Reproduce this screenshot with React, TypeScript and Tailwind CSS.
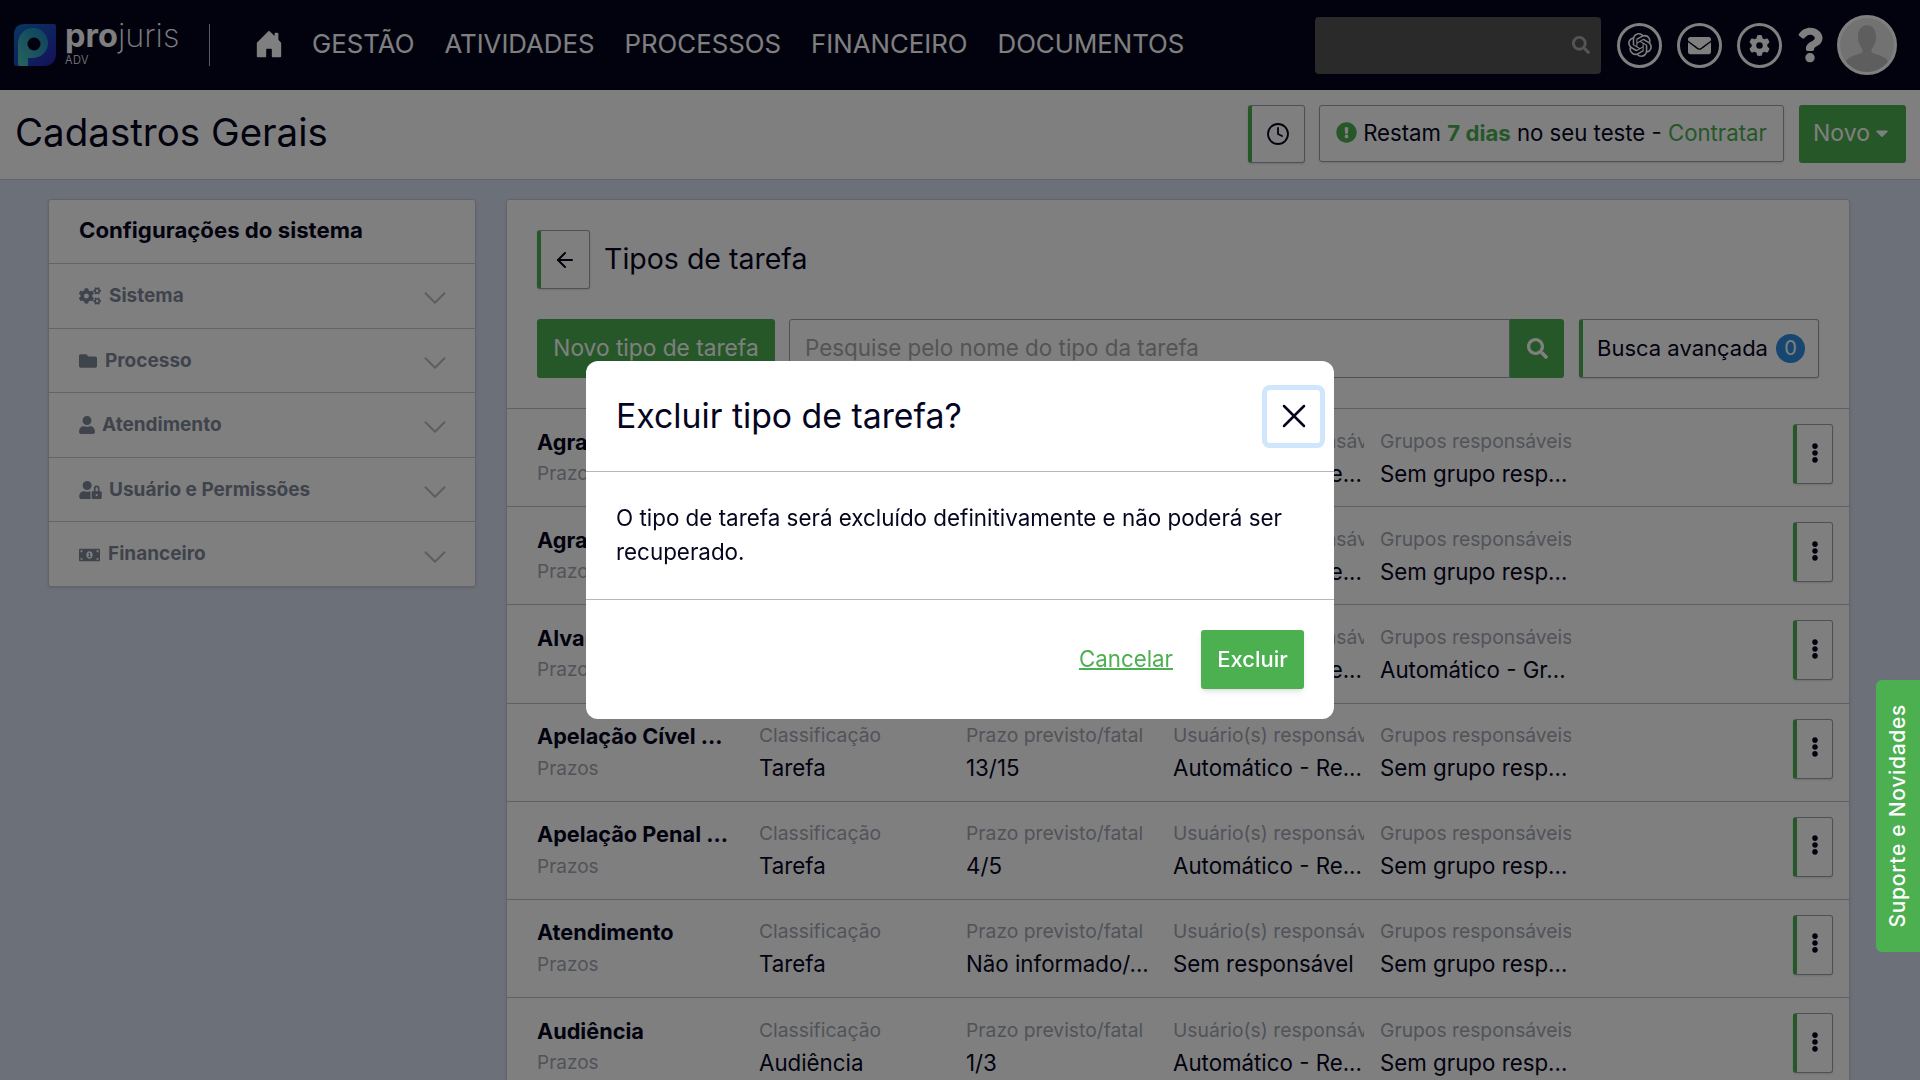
import React from 'react';
import { ArrowLeft, ChevronDown, Clock, X } from 'lucide-react';
import {
  FaCaretDown,
  FaCogs,
  FaEllipsisV,
  FaEnvelope,
  FaExclamationCircle,
  FaFolder,
  FaMoneyBillAlt,
  FaQuestion,
  FaSearch,
  FaUser,
  FaUserLock,
} from 'react-icons/fa';
import { FaGear } from 'react-icons/fa6';
import { BsHouseDoorFill } from 'react-icons/bs';
import { SiOpenai } from 'react-icons/si';

const navItems = ['GESTÃO', 'ATIVIDADES', 'PROCESSOS', 'FINANCEIRO', 'DOCUMENTOS'];

const sideItems = [
  { label: 'Sistema', icon: <FaCogs className="w-[22px] h-[18px]" />, gap: 'gap-[8px]' },
  { label: 'Processo', icon: <FaFolder className="w-[18px] h-[18px]" />, gap: 'gap-[8px]' },
  { label: 'Atendimento', icon: <FaUser className="w-[16px] h-[18px]" />, gap: 'gap-[7px]' },
  { label: 'Usuário e Permissões', icon: <FaUserLock className="w-[23px] h-[18px]" />, gap: 'gap-[7px]' },
  { label: 'Financeiro', icon: <FaMoneyBillAlt className="w-[21px] h-[18px]" />, gap: 'gap-[8px]' },
];

const rows = [
  { name: 'Agravo de Inst...', cls: 'Tarefa', prazo: '13/15', user: 'Automático - Re...', group: 'Sem grupo resp...' },
  { name: 'Agravo Regim...', cls: 'Tarefa', prazo: '13/15', user: 'Automático - Re...', group: 'Sem grupo resp...' },
  { name: 'Alvará Judicial', cls: 'Tarefa', prazo: '4/5', user: 'Automático - Re...', group: 'Automático - Gr...' },
  { name: 'Apelação Cível ...', cls: 'Tarefa', prazo: '13/15', user: 'Automático - Re...', group: 'Sem grupo resp...' },
  { name: 'Apelação Penal ...', cls: 'Tarefa', prazo: '4/5', user: 'Automático - Re...', group: 'Sem grupo resp...' },
  { name: 'Atendimento', cls: 'Tarefa', prazo: 'Não informado/...', user: 'Sem responsável', group: 'Sem grupo resp...' },
  { name: 'Audiência', cls: 'Audiência', prazo: '1/3', user: 'Automático - Re...', group: 'Sem grupo resp...' },
];

function Logo() {
  return (
    <svg viewBox="0 0 42 42" className="w-[42px] h-[42px] shrink-0">
      <defs>
        <linearGradient id="lg1" x1="0" y1="0" x2="1" y2="1">
          <stop offset="0" stopColor="#0f6fc4" />
          <stop offset="1" stopColor="#2c1fb4" />
        </linearGradient>
        <linearGradient id="lg2" x1="0" y1="1" x2="1" y2="0">
          <stop offset="0" stopColor="#4cc9bb" />
          <stop offset="1" stopColor="#1b7fc0" />
        </linearGradient>
      </defs>
      <path d="M11 0H40Q42 0 42 2V29Q42 42 29 42H2Q0 42 0 40V11Q0 0 11 0Z" fill="url(#lg1)" />
      <path d="M4 40V19A15 15 0 1 1 19 34H14V42H6Q4 42 4 40Z" fill="url(#lg2)" />
      <circle cx="20" cy="20" r="6.5" fill="#04041e" />
    </svg>
  );
}

function ColorBarButton({ className, children }: { className: string; children: React.ReactNode }) {
  return (
    <div className={`flex items-center justify-center bg-white border border-gray-400 border-l-4 border-l-[#4caf50] rounded-[3px] shadow-sm ${className}`}>
      {children}
    </div>
  );
}

function TaskRow({ row }: { row: (typeof rows)[number] }) {
  return (
    <div className="h-[98.2px] shrink-0 border-t border-[#bcc0cc] flex pl-[30px] pr-[16px] pt-[15px]">
      <div className="w-[222px] shrink-0 pt-[2.5px]">
        <div className="text-[21.7px] leading-[30px] font-bold text-[#05051f] whitespace-nowrap overflow-hidden">{row.name}</div>
        <div className="text-[19px] leading-[24px] mt-[5.5px] text-[#a3a7b3]">Prazos</div>
      </div>
      <Cell label="Classificação" value={row.cls} width="w-[207px]" />
      <Cell label="Prazo previsto/fatal" value={row.prazo} width="w-[207px]" />
      <Cell label="Usuário(s) responsáveis" value={row.user} width="w-[207px]" />
      <Cell label="Grupos responsáveis" value={row.group} width="w-[207px]" />
      <div className="flex-1 flex justify-end">
        <ColorBarButton className="w-[40px] h-[60px] text-[#05051f]">
          <FaEllipsisV className="w-[14px] h-[20px] mb-[3px]" />
        </ColorBarButton>
      </div>
    </div>
  );
}

function Cell({ label, value, width }: { label: string; value: string; width: string }) {
  return (
    <div className={`${width} shrink-0 pt-[4.5px]`}>
      <div className="w-[191px] overflow-hidden whitespace-nowrap text-[19.3px] leading-[24px] text-[#a3a7b3]">{label}</div>
      <div className="mt-[6px] text-[22.3px] leading-[30px] whitespace-nowrap text-[#05051f]">{value}</div>
    </div>
  );
}

function NavCircle({ children }: { children: React.ReactNode }) {
  return (
    <div className="w-[45px] h-[45px] rounded-full border-[3px] border-white text-white flex items-center justify-center">
      {children}
    </div>
  );
}

export default function App() {
  return (
    <div className="relative h-screen overflow-hidden bg-[#d9e0f3] [font-family:Inter,sans-serif] text-[#05051f]">
      {/* Top nav */}
      <header className="h-[90px] bg-[#04041e] flex items-center pl-[14px] pr-[23px]">
        <Logo />
        <div className="ml-[9px] w-[126px] text-white leading-none mb-[2px]">
          <div className="text-[32.5px] leading-[28px] whitespace-nowrap">
            <span className="font-bold">pro</span>
            <span className="font-extralight">juris</span>
          </div>
          <div className="text-[11px] leading-[12px] mt-[4px] font-light tracking-[0.5px]">ADV</div>
        </div>
        <div className="w-px h-[42px] bg-white/70 ml-[18px]" />
        <BsHouseDoorFill className="w-[30px] h-[30px] text-white ml-[44px] mb-[2px]" />
        <nav className="flex items-center gap-[30px] ml-[28px] mb-[2px] text-white text-[25.8px] whitespace-nowrap">
          {navItems.map((item) => (
            <span key={item}>{item}</span>
          ))}
        </nav>
        <div className="ml-auto w-[286px] h-[57px] bg-[#555555] rounded-[4px] flex items-center justify-end pr-[11px]">
          <FaSearch className="w-[18px] h-[18px] text-[#aaaaaa]" />
        </div>
        <div className="ml-[16px] flex items-center gap-[15px]">
          <NavCircle><SiOpenai className="w-[24px] h-[24px]" /></NavCircle>
          <NavCircle><FaEnvelope className="w-[23px] h-[23px]" /></NavCircle>
          <NavCircle><FaGear className="w-[21px] h-[21px]" /></NavCircle>
        </div>
        <FaQuestion className="ml-[15px] w-[26px] h-[40px] text-white" />
        <div className="ml-[14px] w-[60px] h-[60px] rounded-full border-[3px] border-white bg-[#e4e4e4] overflow-hidden">
          <svg viewBox="0 0 60 60" className="w-full h-full">
            <path d="M30 8c7 0 10 6 10 13 0 6-3 11-5 14v3c3 2 14 4 18 9v13H7V47c4-5 15-7 18-9v-3c-2-3-5-8-5-14 0-7 3-13 10-13Z" fill="#bcbcbc" />
          </svg>
        </div>
      </header>

      {/* Page title bar */}
      <div className="h-[90px] bg-white border-b border-[#c6c9d2] flex items-start pt-[15px] pl-[15px] pr-[14px]">
        <h1 className="text-[38.5px] leading-[54px] font-normal">Cadastros Gerais</h1>
        <div className="ml-auto flex items-start">
          <ColorBarButton className="w-[57px] h-[58px]">
            <Clock className="w-[24px] h-[24px]" strokeWidth={1.8} />
          </ColorBarButton>
          <div className="ml-[14px] w-[465px] h-[57px] pb-[2px] flex items-center justify-center gap-[6px] bg-white border border-gray-400 rounded-[3px] text-[22.2px] whitespace-nowrap shadow-sm">
            <FaExclamationCircle className="w-[21px] h-[21px] text-[#4caf50]" />
            <span>
              Restam <b className="text-[#4caf50]">7 dias</b> no seu teste - <span className="text-[#4caf50]">Contratar</span>
            </span>
          </div>
          <div className="ml-[15px] w-[107px] h-[58px] pb-[2px] bg-[#4caf50] rounded-[3px] flex items-center justify-center gap-[2px] text-white text-[23px]">
            Novo
            <FaCaretDown className="w-[20px] h-[20px]" />
          </div>
        </div>
      </div>

      {/* Body */}
      <div className="flex items-start pt-[19px] pl-[48px] pr-[70px] gap-[30px]">
        <aside className="w-[428px] shrink-0 bg-white border border-[#c6c9d2] rounded-[3px] shadow-sm">
          <div className="h-[63px] pb-[3px] flex items-center pl-[30px] text-[22.2px] font-bold">Configurações do sistema</div>
          {sideItems.map((item) => (
            <div key={item.label} className="h-[64.6px] pt-[1px] border-t border-[#c6c9d2] flex items-center pl-[30px] pr-[21px] text-[#7f8799] font-bold text-[19px]">
              <span className={`flex items-center ${item.gap}`}>
                {item.icon}
                {item.label}
              </span>
              <ChevronDown className="ml-auto w-[38px] h-[38px] text-[#bdbdbd] mt-[4px]" strokeWidth={1.3} />
            </div>
          ))}
        </aside>

        <main className="flex-1 min-w-0 bg-white border border-[#c6c9d2] rounded-[3px] shadow-sm">
          <div className="flex items-center pt-[30px] pl-[30px]">
            <ColorBarButton className="w-[53px] h-[59px]">
              <ArrowLeft className="w-[24px] h-[24px]" strokeWidth={2} />
            </ColorBarButton>
            <h2 className="ml-[14px] text-[28.5px] font-normal">Tipos de tarefa</h2>
          </div>
          <div className="flex pt-[30px] pl-[30px] pr-[30px] pb-[30px]">
            <div className="w-[238px] h-[59px] pb-[1px] bg-[#4caf50] rounded-[3px] text-white text-[22.7px] flex items-center justify-center whitespace-nowrap">
              Novo tipo de tarefa
            </div>
            <div className="ml-[14px] flex-1 h-[59px] pb-[1px] border border-gray-400 rounded-l-[3px] flex items-center pl-[15px] text-[22.4px] text-[#a8a8a8] whitespace-nowrap">
              Pesquise pelo nome do tipo da tarefa
            </div>
            <div className="w-[54px] h-[59px] bg-[#4caf50] rounded-r-[3px] flex items-center justify-center text-white">
              <FaSearch className="w-[21px] h-[21px]" />
            </div>
            <ColorBarButton className="ml-[15px] w-[240px] h-[59px] pb-[1px] pl-[1px] gap-[8px] text-[22px] whitespace-nowrap">
              Busca avançada
              <span className="w-[29px] h-[29px] rounded-full bg-[#2e8fe0] text-white flex items-center justify-center text-[20px]">0</span>
            </ColorBarButton>
          </div>
          <div className="flex flex-col">
            {rows.map((row) => (
              <TaskRow key={row.name} row={row} />
            ))}
          </div>
        </main>
      </div>

      {/* Dim layer */}
      <div className="fixed inset-0 z-10 bg-black/50" />

      {/* Side tab */}
      <div className="fixed z-20 right-0 top-[680px] w-[44px] h-[272px] bg-[#4caf50] rounded-l-[6px] flex items-center justify-center">
        <span className="-rotate-90 whitespace-nowrap text-white text-[21px] tracking-[0.7px] font-medium">Suporte e Novidades</span>
      </div>

      {/* Modal */}
      <div className="fixed inset-0 z-30 flex items-center justify-center">
        <div className="w-[748px] h-[358px] bg-white rounded-[12px] flex flex-col">
          <div className="h-[111px] border-b border-[#b4b6be] flex items-center justify-between pl-[30px] pr-[10px]">
            <h3 className="text-[33.8px] font-normal">Excluir tipo de tarefa?</h3>
            <div className="w-[53px] h-[53px] m-[4px] rounded-[3px] ring-[5px] ring-[#cfe6fd] flex items-center justify-center">
              <X className="w-[40px] h-[40px]" strokeWidth={1.5} />
            </div>
          </div>
          <div className="h-[128px] border-b border-[#b4b6be] px-[30px] pt-[29px] text-[22.4px] leading-[34px]">
            O tipo de tarefa será excluído definitivamente e não poderá ser recuperado.
          </div>
          <div className="flex-1 flex items-center justify-end gap-[28px] pr-[30px]">
            <span className="text-[22.3px] text-[#4caf50] underline decoration-2 mb-[2px]">Cancelar</span>
            <div className="w-[103px] h-[59px] bg-[#4caf50] rounded-[3px] shadow-md text-white text-[22px] font-medium flex items-center justify-center">
              Excluir
            </div>
          </div>
        </div>
      </div>
    </div>
  );
}
